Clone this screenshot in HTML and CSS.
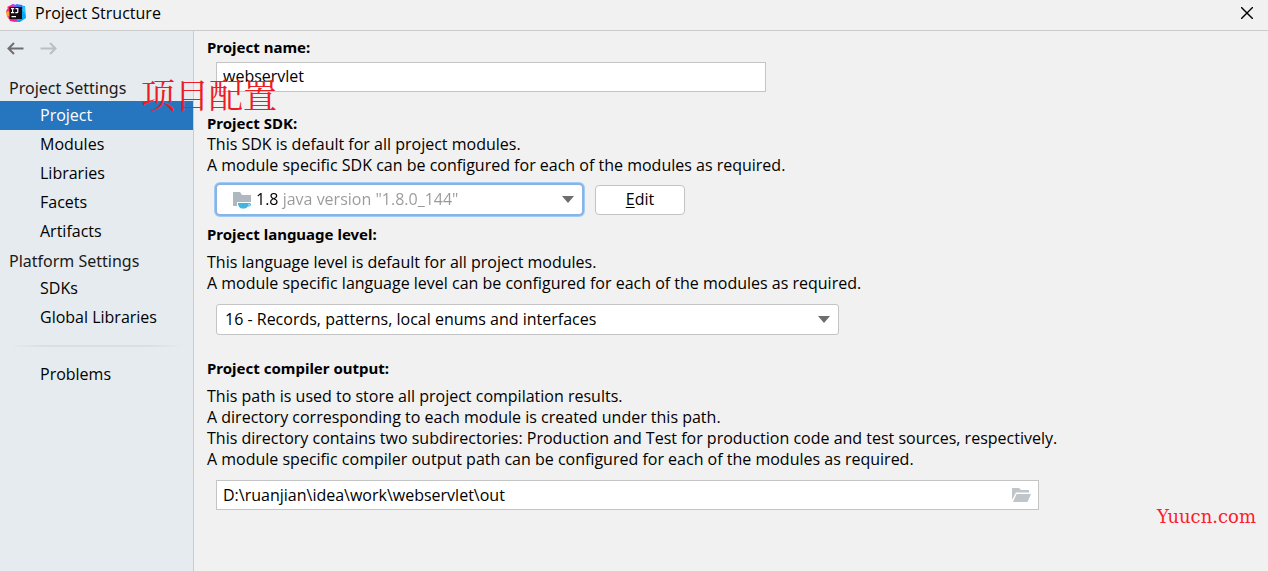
FILE: index.html
```
<!DOCTYPE html>
<html lang="en">
<head>
<meta charset="utf-8">
<title>Project Structure</title>
<link rel="stylesheet" href="styles.css">
</head>
<body>
<div class="window">
  <header class="titlebar">
    <svg class="logo" viewBox="0 0 20 20" aria-hidden="true">
      <path fill="#fe315d" d="M1 6l4-3 5 7-4 8-4-3 1-4-3-2z"/>
      <path fill="#ff9a34" d="M0 9l3-1 3 6-2 3-3-3z"/>
      <path fill="#f61e98" d="M2 13l5 1 6 3-4 2-5-1z"/>
      <path fill="#fb2b7a" d="M1 4l6-3 3 4-5 3z"/>
      <path fill="#9a4cf5" d="M6 1l5 1 1 3H7z"/>
      <path fill="#08a5f5" d="M14 3l5 0 1 12-6 4-5 0 6-5z"/>
      <path fill="#20c4f8" d="M16 2l3 2 0 7-4-6z"/>
      <path fill="#3478fa" d="M10 1l6 1 1 4-6-1z"/>
      <path fill="#140d14" d="M3.500 4h12.500v12H3.500z"/>
      <path fill="none" stroke="#fff" stroke-width="1.2" d="M5 5.600h3.200M6.600 5.600v4M5 9.600h3.200M9.500 5.600h2.300v3.100q0 .9-.9.900H9.300M5.500 13.600h4.500"/>
    </svg>
    <h1 class="title">Project Structure</h1>
    <button class="close" type="button" aria-label="Close">
      <svg viewBox="0 0 12 12" width="12" height="12"><path d="M0 0L12 12M12 0L0 12"/></svg>
    </button>
  </header>
  <div class="body">
    <nav class="sidebar">
      <div class="history">
        <button type="button" class="arrow" aria-label="Back"><svg viewBox="0 0 17 13" width="17" height="13"><path d="M16.500 6.500H1.500M7 1L1.500 6.500 7 12"/></svg></button>
        <button type="button" class="arrow arrow-off" aria-label="Forward" disabled><svg viewBox="0 0 17 13" width="17" height="13"><path d="M.5 6.500h15M10 1l5.500 5.500L10 12"/></svg></button>
      </div>
      <h2 class="group">Project Settings</h2>
      <a class="item selected" href="#project">Project</a>
      <a class="item" href="#modules">Modules</a>
      <a class="item" href="#libraries">Libraries</a>
      <a class="item" href="#facets">Facets</a>
      <a class="item" href="#artifacts">Artifacts</a>
      <h2 class="group">Platform Settings</h2>
      <a class="item" href="#sdks">SDKs</a>
      <a class="item" href="#global">Global Libraries</a>
      <hr class="divider">
      <a class="item" href="#problems">Problems</a>
      <span class="note">项目配置</span>
    </nav>
    <main class="content" id="project">
      <section class="section">
        <label class="heading" for="name">Project name:</label>
        <input class="field name" id="name" type="text" value="webservlet">
      </section>
      <section class="section sdk">
        <label class="heading" for="sdk">Project SDK:</label>
        <p class="text">This SDK is default for all project modules.<br>A module specific SDK can be configured for each of the modules as required.</p>
        <div class="sdk-row">
          <div class="combo focused">
            <svg class="folder" viewBox="0 0 20 18" width="20" height="18" aria-hidden="true">
              <path fill="#afb8bf" d="M1 1h7l2 3h9v7H5v4H1z"/>
              <path fill="#40b6e0" d="M6 12h10.500c3.500-.5 3.500 3.500-.8 3.500-1 1.600-2 2-4.500 2-3.500 0-5.200-2-5.200-5.500zM16.500 13v1.500c1.800 0 1.800-1.500 0-1.500z"/>
            </svg>
            <select class="select sdk-select" id="sdk"><option>1.8 java version "1.8.0_144"</option></select>
            <svg class="caret" viewBox="0 0 12 7" width="12" height="7" aria-hidden="true"><path d="M0 0h12L6 7z"/></svg>
          </div>
          <button class="edit" type="button"><u>E</u>dit</button>
        </div>
      </section>
      <section class="section level">
        <label class="heading" for="level">Project language level:</label>
        <p class="text spaced">This language level is default for all project modules.<br>A module specific language level can be configured for each of the modules as required.</p>
        <div class="combo wide">
          <select class="select" id="level"><option>16 - Records, patterns, local enums and interfaces</option></select>
          <svg class="caret" viewBox="0 0 12 7" width="12" height="7" aria-hidden="true"><path d="M0 0h12L6 7z"/></svg>
        </div>
      </section>
      <section class="section output">
        <label class="heading" for="out">Project compiler output:</label>
        <p class="text spaced">This path is used to store all project compilation results.<br>A directory corresponding to each module is created under this path.<br>This directory contains two subdirectories: Production and Test for production code and test sources, respectively.<br>A module specific compiler output path can be configured for each of the modules as required.</p>
        <div class="field path">
          <input class="path-input" id="out" type="text" value="D:\ruanjian\idea\work\webservlet\out">
          <button class="browse" type="button" aria-label="Browse">
            <svg viewBox="0 0 19 14" width="19" height="14"><path d="M0 0h7l2 2h8v2.500H4L0 12zM4.500 6H19l-3.500 8H1z"/></svg>
          </button>
        </div>
      </section>
    </main>
  </div>
  <span class="watermark">Yuucn.com</span>
</div>
</body>
</html>
```
FILE: styles.css
```
* { box-sizing: border-box; }
body {
  margin: 0;
  background: #f1f1f1;
  color: #000;
  font: 16px/21px "Open Sans", "Noto Sans CJK SC", sans-serif;
}
button, input, select { font: inherit; color: inherit; }
.window { position: relative; display: flex; flex-direction: column; min-height: 100vh; }
.titlebar {
  display: flex;
  align-items: center;
  height: 31px;
  padding: 0 15px 4px 6px;
  border-bottom: 1px solid #cbcbcb;
}
.logo { width: 20px; height: 20px; }
.title { flex: 1; margin: 0 0 0 9px; font-size: 16px; font-weight: 400; }
.close { display: flex; padding: 0; border: 0; background: none; }
.close path { stroke: #000; stroke-width: 1.4; }
.body { display: flex; flex: 1; }
.sidebar {
  position: relative;
  flex: none;
  width: 194px;
  background: #e6ebef;
  border-right: 1px solid #c8cdd1;
}
.history { display: flex; gap: 16px; padding: 11px 7px 0; height: 42px; }
.arrow { display: flex; padding: 0; border: 0; background: none; height: 13px; }
.arrow path { fill: none; stroke: #6e6e6e; stroke-width: 2; }
.arrow-off path { stroke: #bcbfc1; }
.group { margin: 0; padding: 2px 0 0 9px; font: 400 16px/26px "Noto Sans", sans-serif; color: #1a1a1a; }
.item { display: block; padding-left: 40px; line-height: 29px; color: #000; text-decoration: none; }
.selected { background: #2675bf; color: #fff; }
.divider { height: 2px; margin: 13px 10px; border: 0; background: linear-gradient(90deg, #e6ebef, #d9dee1 20%, #d9dee1 80%, #e6ebef); }
.note {
  position: absolute;
  z-index: 1;
  left: 141px;
  top: 43px;
  font: 400 34px/40px "Noto Serif CJK SC", "Noto Sans CJK SC", serif;
  color: #ed1c24;
  white-space: nowrap;
}
.content { flex: 1; min-width: 0; padding: 6px 13px; }
.heading { display: block; font: 700 15px/21px "Noto Sans", sans-serif; }
.text { margin: 0; }
.spaced { margin-top: 7px; }
.field { border: 1px solid #c4c4c4; background: #fff; height: 30px; margin-left: 9px; }
.name { display: block; width: 550px; max-width: 100%; margin-top: 4px; padding: 0 6px 2px; }
.sdk { margin-top: 21px; }
.sdk-row { display: flex; align-items: center; gap: 11px; margin: 7px 0 0 8px; }
.combo {
  position: relative;
  display: flex;
  align-items: center;
  height: 31px;
  background: #fff;
  border: 1px solid #c4c4c4;
  border-radius: 3px;
}
.focused { width: 369px; height: 33px; border: 2px solid #87b4e8; border-radius: 5px; box-shadow: 0 0 0 1px #a5cbf4; }
.folder { margin-left: 15px; }
.select { flex: 1; min-width: 0; height: 100%; padding: 0 30px 0 8px; border: 0; background: none; appearance: none; outline: 0; }
.sdk-select {
  padding-left: 4px;
  color: transparent;
  background: linear-gradient(90deg, #000 27px, #999 27px);
  background-clip: text;
}
.caret { position: absolute; right: 8px; pointer-events: none; fill: #6e6e6e; }
.edit { width: 90px; height: 30px; padding: 0; border: 1px solid #c4c4c4; border-radius: 4px; background: #fff; }
.edit u { text-underline-offset: 2px; }
.level { margin-top: 8px; }
.wide { width: 623px; max-width: 100%; margin: 10px 0 0 9px; }
.output { margin-top: 23px; }
.path { display: flex; align-items: center; width: 823px; max-width: 100%; margin-top: 10px; }
.path-input { flex: 1; min-width: 0; padding: 0 6px; border: 0; background: none; }
.browse { display: flex; padding: 0; border: 0; margin-right: 7px; background: none; }
.browse path { fill: #bfc5c9; }
.watermark {
  position: absolute;
  right: 12px;
  bottom: 44px;
  font: 18px/21px "DejaVu Serif", serif;
  color: #ff1a2d;
}
```
